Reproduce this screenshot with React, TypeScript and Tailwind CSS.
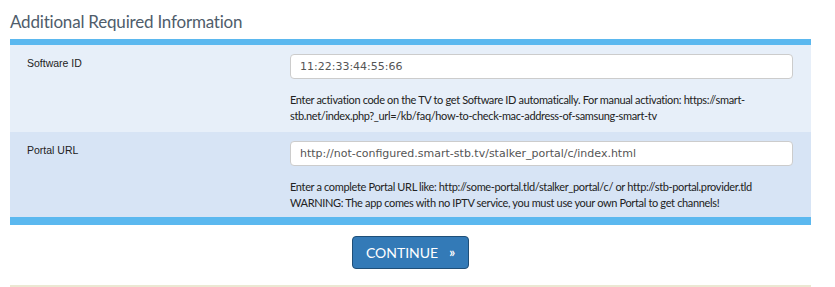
import React, { useState } from "react"

export default function App() {
  const [softwareId, setSoftwareId] = useState("11:22:33:44:55:66")
  const [portalUrl, setPortalUrl] = useState("http://not-configured.smart-stb.tv/stalker_portal/c/index.html")

  return (
    <div className="w-[835px] h-[287px] bg-white overflow-hidden">
      <div className="pl-[10px] w-[811px]">
        {/* Heading */}
        <h3 className="h-[39px] pt-[11px] text-[17px] leading-[22px] tracking-[-0.2px] text-[#4f5d6b] font-['Lato',sans-serif]">
          Additional Required Information
        </h3>

        {/* Form table */}
        <div className="border-t-[6px] border-b-[8px] border-[#5bb8ef]">
          <FieldRow
            label="Software ID"
            value={softwareId}
            onchange={(e: any) => setSoftwareId(e.target.value)}
            bg="bg-[#e7eff9]"
            h="h-[87px]"
            help={
              <>
                Enter activation code on the TV to get Software ID automatically. For manual activation: https://smart-
                <br />
                stb.net/index.php?_url=/kb/faq/how-to-check-mac-address-of-samsung-smart-tv
              </>
            }
          />
          <FieldRow
            label="Portal URL"
            value={portalUrl}
            onchange={(e: any) => setPortalUrl(e.target.value)}
            bg="bg-[#d7e4f5]"
            h="h-[85px]"
            help={
              <>
                Enter a complete Portal URL like: http://some-portal.tld/stalker_portal/c/ or http://stb-portal.provider.tld
                <br />
                WARNING: The app comes with no IPTV service, you must use your own Portal to get channels!
              </>
            }
          />
        </div>

        {/* Continue */}
        <div className="flex justify-center pt-[11px] h-[60px]">
          <button className="w-[117px] h-[33px] bg-[#337ab7] border border-[#1f4f78] rounded-[4px] text-white text-[14px] font-['Lato',sans-serif] flex items-center justify-center gap-[11px]">
            CONTINUE <span className="text-[13px] font-bold">»</span>
          </button>
        </div>
        <div className="h-[2px] bg-[#ebe8d3]"></div>
      </div>
    </div>
  )
}

// --------- mini Components -----------
type RowData = {
  label: string
  value: string
  onchange: any
  bg: string
  h: string
  help: React.ReactNode
}
const FieldRow = ({ label, value, onchange, bg, h, help }: RowData) => {
  return (
    <div className={`flex ${bg} ${h}`}>
      <div className="w-[280px] pl-[17px] pt-[11px] text-[10.5px] text-[#222] font-['Liberation_Sans',sans-serif]">
        {label}
      </div>
      <div className="flex flex-col pt-[9px]">
        <input
          type="text"
          className="w-[503px] h-[25px] px-[9px] border border-[#cccccc] rounded-[4px] bg-white text-[11px] text-[#555] font-['DejaVu_Sans',sans-serif] outline-none"
          value={value}
          onChange={onchange}
        />
        <p className="mt-[13px] text-[11px] leading-[16px] tracking-[-0.35px] text-[#222] font-['Lato',sans-serif]">{help}</p>
      </div>
    </div>
  )
}
// -------------------------------------
